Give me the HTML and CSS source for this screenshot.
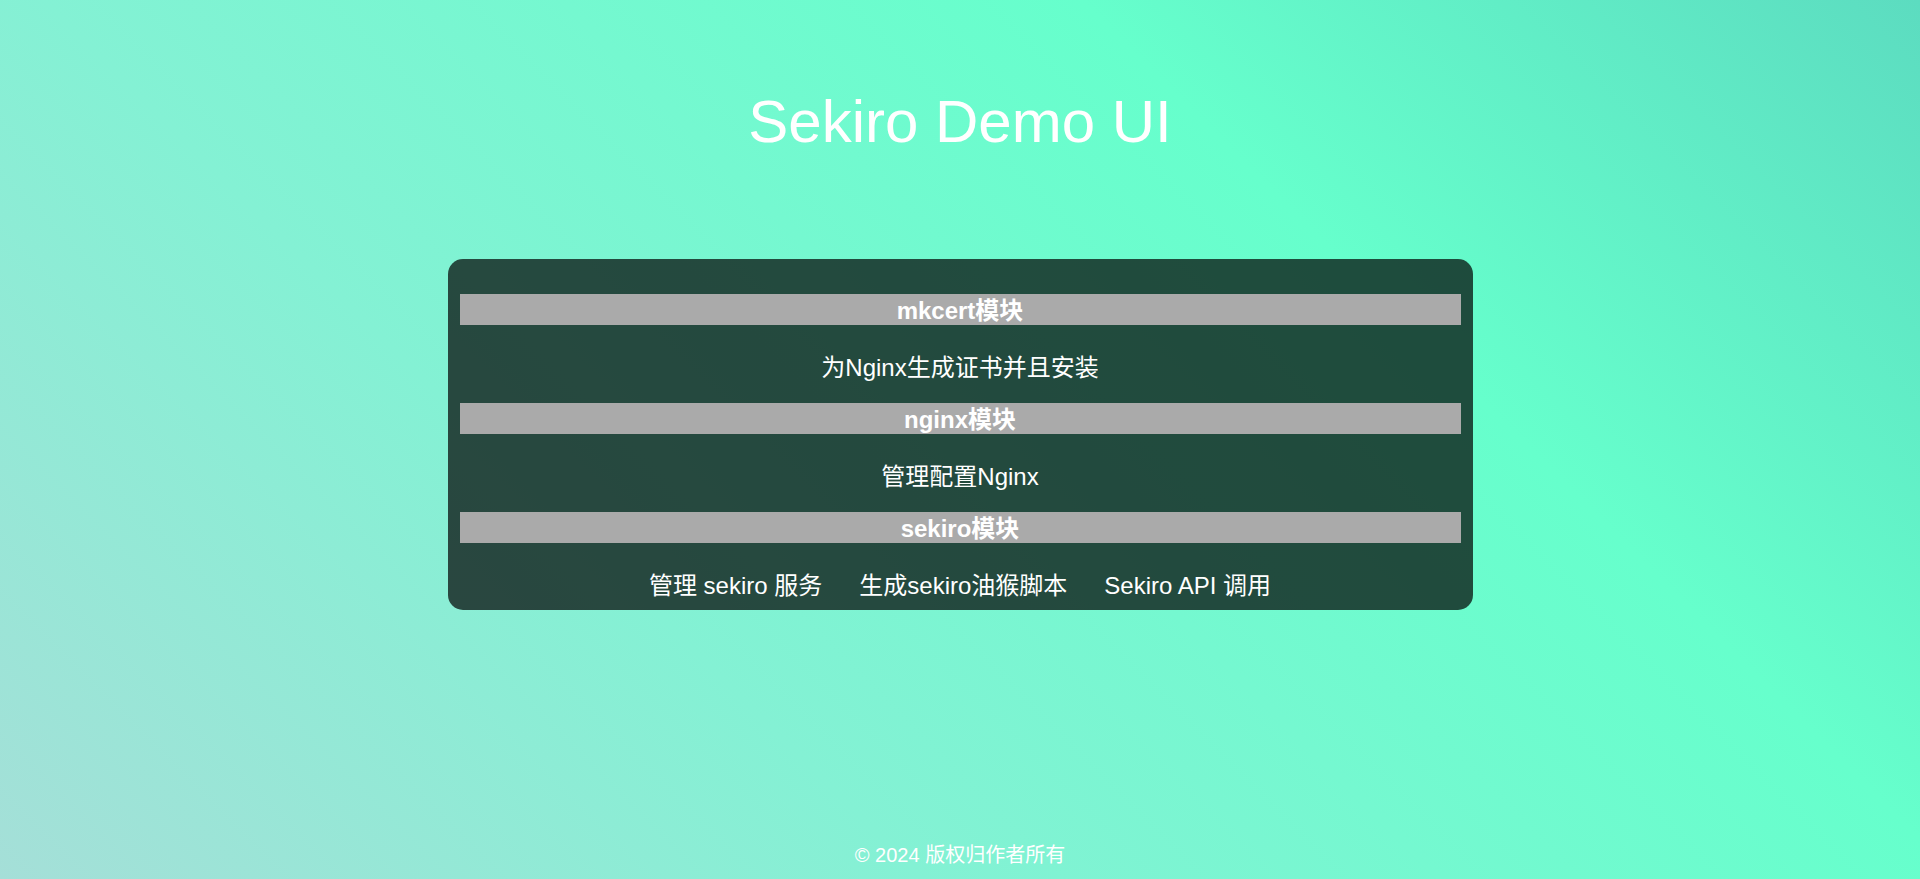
FILE: index.html
```html
<!DOCTYPE html>
<html lang="zh-CN">
<head>
<meta charset="utf-8">
<title>Sekiro Demo UI</title>
<link rel="stylesheet" href="styles.css">
</head>
<body>
<div class="page">
  <header class="top">
    <h1 class="title">Sekiro Demo UI</h1>
  </header>
  <main class="card">
    <section class="module">
      <h2 class="bar">mkcert模块</h2>
      <div class="links"><a class="link" href="#">为Nginx生成证书并且安装</a></div>
    </section>
    <section class="module">
      <h2 class="bar">nginx模块</h2>
      <div class="links"><a class="link" href="#">管理配置Nginx</a></div>
    </section>
    <section class="module last">
      <h2 class="bar">sekiro模块</h2>
      <div class="links">
        <a class="link" href="#">管理 sekiro 服务</a>
        <a class="link" href="#">生成sekiro油猴脚本</a>
        <a class="link" href="#">Sekiro API 调用</a>
      </div>
    </section>
  </main>
  <footer class="footer">© 2024 版权归作者所有</footer>
</div>
</body>
</html>
```

FILE: styles.css
```css
html, body {
  margin: 0;
  padding: 0;
  height: 100%;
}

body {
  font-family: "Liberation Sans", Arial, "Noto Sans CJK SC", sans-serif;
  color: #ffffff;
  background: linear-gradient(45deg, #a5dfd8 0%, #84f1d4 33%, #66ffcc 70%, #5cdcc0 100%);
  overflow: hidden;
}

.page {
  min-height: 100vh;
  display: flex;
  flex-direction: column;
  align-items: center;
  box-sizing: border-box;
}

.top {
  padding-top: 92px;
  height: 259px;
  box-sizing: border-box;
}

.title {
  margin: 0;
  font-size: 60px;
  line-height: 60px;
  font-weight: normal;
  text-align: center;
}

.card {
  width: 1025px;
  box-sizing: border-box;
  padding: 35px 12px 10px;
  background: rgba(0, 0, 0, 0.7);
  border-radius: 15px;
  display: flex;
  flex-direction: column;
}

.bar {
  margin: 0;
  height: 31px;
  box-sizing: border-box;
  padding-top: 2px;
  line-height: 29px;
  background: #aaaaaa;
  font-size: 24px;
  font-weight: bold;
  text-align: center;
  color: #ffffff;
}

.links {
  margin: 29px 0 21px;
  height: 28px;
  display: flex;
  justify-content: center;
  gap: 37px;
}

.module.last .links {
  margin-bottom: 0;
}

.link {
  font-size: 24px;
  line-height: 28px;
  color: #ffffff;
  text-decoration: none;
  white-space: nowrap;
}

.footer {
  margin-top: auto;
  padding-bottom: 12px;
  font-size: 20px;
  line-height: 24px;
  text-align: center;
}
```
